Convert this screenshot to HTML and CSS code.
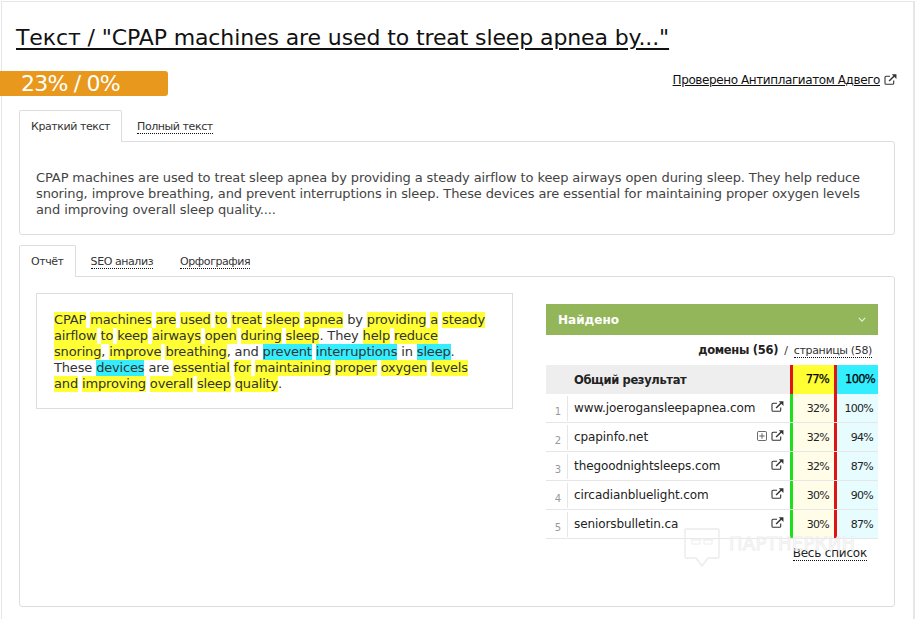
FILE: index.html
```html
<!DOCTYPE html>
<html lang="ru">
<head>
<meta charset="utf-8">
<title>Текст</title>
<link rel="stylesheet" href="styles.css">
</head>
<body>
<svg class="sprite" width="0" height="0" aria-hidden="true"><defs>
<symbol id="ext" viewBox="0 0 14 12"><path d="M10.5 7v3a1.2 1.2 0 0 1-1.2 1.2H2.2A1.2 1.2 0 0 1 1 10V3.6a1.2 1.2 0 0 1 1.2-1.2h4.3" fill="none" stroke="currentColor" stroke-width="1.2"/><path d="M5.5 7.6 11.3 1.8" fill="none" stroke="currentColor" stroke-width="1.6"/><path d="M8.4.4h5.1v5z" fill="currentColor"/></symbol>
</defs></svg>
<main class="frame">
  <h1 class="title">Текст / "CPAP machines are used to treat sleep apnea by..."</h1>
  <div class="score-row">
    <div class="score">23% / 0%</div>
    <div class="checked"><a href="#">Проверено Антиплагиатом Адвего</a><svg class="ext"><use href="#ext"/></svg></div>
  </div>
  <div class="tabs">
    <span class="tab active">Краткий текст</span>
    <span class="tab"><span class="dotted">Полный текст</span></span>
  </div>
  <section class="panel text-panel">
    CPAP machines are used to treat sleep apnea by providing a steady airflow to keep airways open during sleep. They help reduce snoring, improve breathing, and prevent interruptions in sleep. These devices are essential for maintaining proper oxygen levels and improving overall sleep quality....
  </section>
  <div class="tabs second">
    <span class="tab active">Отчёт</span>
    <span class="tab"><span class="dotted">SEO анализ</span></span>
    <span class="tab"><span class="dotted">Орфография</span></span>
  </div>
  <section class="panel report">
    <div class="marked"><span class="y">CPAP</span> <span class="y">machines</span> <span class="y">are</span> <span class="y">used</span> <span class="y">to</span> <span class="y">treat</span> <span class="y">sleep</span> <span class="y">apnea</span> by <span class="y">providing</span> <span class="y">a</span> <span class="y">steady</span> <span class="y">airflow</span> <span class="y">to</span> <span class="y">keep</span> <span class="y">airways</span> <span class="y">open</span> <span class="y">during</span> <span class="y">sleep</span>. They <span class="y">help</span> <span class="y">reduce</span> <span class="nb"><span class="y">snoring</span>,</span> <span class="y">improve</span> <span class="nb"><span class="y">breathing</span>,</span> and <span class="c">prevent</span> <span class="c">interruptions</span> in <span class="nb"><span class="c">sleep</span>.</span> These <span class="c">devices</span> are <span class="y">essential</span> <span class="y">for</span> <span class="y">maintaining</span> <span class="y">proper</span> <span class="y">oxygen</span> <span class="y">levels</span> <span class="y">and</span> <span class="y">improving</span> <span class="y">overall</span> <span class="y">sleep</span> <span class="nb"><span class="y">quality</span>.</span></div>
    <div class="found">
      <div class="found-head"><span>Найдено</span><svg class="chev" viewBox="0 0 10 6"><path d="M1 1l4 4 4-4" fill="none" stroke="currentColor" stroke-width="1.4"/></svg></div>
      <div class="found-sub"><b>домены (56)</b> <i>/</i> <span class="dotted">страницы (58)</span></div>
      <div class="row total">
        <span class="num"></span><span class="name">Общий результат</span>
        <span class="pct a red">77%</span><span class="pct b red">100%</span>
      </div>
      <div class="row"><span class="num">1</span><span class="name">www.joerogansleepapnea.com<svg class="ext"><use href="#ext"/></svg></span><span class="pct a green">32%</span><span class="pct b red">100%</span></div>
      <div class="row"><span class="num">2</span><span class="name">cpapinfo.net<svg class="plus" viewBox="0 0 11 11"><rect x=".5" y=".5" width="10" height="10" rx="1.5" fill="none" stroke="currentColor"/><path d="M5.5 2.5v6M2.5 5.5h6" stroke="currentColor"/></svg><svg class="ext near"><use href="#ext"/></svg></span><span class="pct a green">32%</span><span class="pct b red">94%</span></div>
      <div class="row"><span class="num">3</span><span class="name">thegoodnightsleeps.com<svg class="ext"><use href="#ext"/></svg></span><span class="pct a green">32%</span><span class="pct b red">87%</span></div>
      <div class="row"><span class="num">4</span><span class="name">circadianbluelight.com<svg class="ext"><use href="#ext"/></svg></span><span class="pct a green">30%</span><span class="pct b red">90%</span></div>
      <div class="row"><span class="num">5</span><span class="name">seniorsbulletin.ca<svg class="ext"><use href="#ext"/></svg></span><span class="pct a green">30%</span><span class="pct b red">87%</span></div>
      <div class="all"><span class="dotted">Весь список</span></div>
      <div class="watermark" aria-hidden="true"><svg viewBox="0 0 36 39" width="36" height="39"><path d="M2 1h32a1 1 0 0 1 1 1v27a1 1 0 0 1-1 1H24l-6 8-6-8H2a1 1 0 0 1-1-1V2a1 1 0 0 1 1-1z" fill="none" stroke="#ececec" stroke-width="1.4"/><path d="M6 11h24M8 12h8v4H8zM20 12h8v4h-8z" fill="none" stroke="#ececec"/></svg><span>ПАРТНЕРКИН</span></div>
    </div>
  </section>
</main>
</body>
</html>
```
FILE: styles.css
```css
* { box-sizing: border-box; }
html, body { margin: 0; padding: 0; height: 619px; overflow: hidden; background: #fff; }
body { font-family: "DejaVu Sans", sans-serif; font-size: 12px; color: #333; }
.sprite { position: absolute; }
.frame { height: 640px; width: 914px; margin: 1px 0 0 1px; border: 1px solid #e6e6e6; border-right-width: 2px; border-bottom: 0; padding: 0; }
.title { margin: 0; padding: 22px 0 0 14px; height: 51px; font-size: 22px; line-height: 28px; letter-spacing: -.11px; font-weight: 400; color: #111; text-decoration: underline; text-decoration-thickness: 2px; text-underline-offset: 3px; white-space: nowrap; }
.score-row { display: flex; justify-content: space-between; align-items: center; margin: 18px 0 0 -2px; height: 25px; padding-right: 16px; }
.score { width: 168px; height: 25px; padding-left: 21px; background: #e8981c; border-radius: 0 3px 3px 0; color: #fff; font-size: 22px; line-height: 25px; letter-spacing: -.8px; white-space: nowrap; }
.checked { display: flex; align-items: center; gap: 4px; font-size: 12px; letter-spacing: -.4px; color: #111; margin-top: -8px; }
.checked a { color: #111; }
.ext { width: 13px; height: 11px; color: #333; flex: none; }
.tabs { display: flex; height: 32px; margin: 14px 0 -1px 17px; position: relative; z-index: 1; }
.tabs.second { margin-top: 10px; }
.tab { padding: 9px 11px 0 14px; font-size: 11px; line-height: 14px; letter-spacing: -.43px; color: #333; border: 1px solid transparent; border-bottom: 0; }
.tab.active { background: #fff; border-color: #ddd; border-radius: 2px 2px 0 0; padding: 9px 11px 0; }
.dotted { border-bottom: 1px dotted #111; }
.panel { margin: 0 0 0 17px; width: 876px; border: 1px solid #ddd; border-radius: 0 3px 3px 3px; }
.text-panel { height: 94px; padding: 28px 16px 0; font-size: 13px; line-height: 16px; letter-spacing: -.115px; color: #444; }
.report { height: 331px; padding: 16px 16px; display: flex; align-items: flex-start; }
.marked { width: 477px; height: 116px; padding: 18px 22px 18px 17px; border: 1px solid #ddd; font-size: 13px; line-height: 16px; letter-spacing: -.16px; color: #333; }
.nb { white-space: nowrap; }
.y, .c { display: inline-block; line-height: 16px; }
.y { background: #ffff33; }
.c { background: #33eeff; }
.found { width: 332px; margin: 11px 0 0 33px; position: relative; }
.found-head { height: 31px; padding: 0 12px; display: flex; justify-content: space-between; align-items: center; background: #94b65a; color: #fff; font-weight: 700; font-size: 12px; }
.chev { width: 8px; height: 5px; color: #e7efd8; }
.found-sub { height: 30px; padding: 7px 6px 0 0; text-align: right; font-size: 11px; line-height: 16px; letter-spacing: -.35px; }
.found-sub b { color: #222; font-size: 11.5px; letter-spacing: -.3px; }
.found-sub i { font-style: normal; margin: 0 3px; }
.row { display: grid; grid-template-columns: 22px 1fr 44px 44px; grid-template-rows: 28px; height: 29px; border-bottom: 1px solid #e6e6e6; align-items: stretch; line-height: 28px; font-size: 12px; letter-spacing: -.08px; color: #222; }
.row.total { grid-template-rows: 29px; border-bottom: 0; background: #eee; font-weight: 700; font-size: 11.5px; letter-spacing: -.35px; }
.num { color: #999; font-size: 10px; text-align: center; padding-left: 3px; border-right: 1px solid #e6e6e6; margin: 2px 0 1px; line-height: 32px; }
.total .num { border: 0; }
.name { display: flex; align-items: center; padding: 0 0 0 6px; white-space: nowrap; }
.name .ext { margin: -3px 6px 0 auto; }
.name .ext.near { margin-left: 4px; }
.plus { width: 10px; height: 10px; margin: -3px 0 0 auto; color: #555; }
.pct { text-align: right; padding: 1px 5px 0 0; border-left: 3px solid; font-size: 11px; letter-spacing: -.75px; }
.pct.a { background: #fffde8; }
.pct.b { background: #e6fcff; }
.total .pct { padding-top: 0; font-size: 11.5px; font-weight: 400; color: #000; -webkit-text-stroke: .25px #000; }
.total .pct.a { background: #ffff33; }
.total .pct.b { background: #33eeff; padding-right: 3px; }
.green { border-left-color: #1de01d; }
.red { border-left-color: #e01414; }
.all { text-align: right; padding: 7px 11px 0 0; font-size: 12px; line-height: 15px; letter-spacing: -.2px; color: #222; }
.watermark { position: absolute; left: 138px; top: 224px; display: flex; gap: 9px; pointer-events: none; }
.watermark span { font-size: 18px; line-height: 20px; margin-top: 6px; color: transparent; -webkit-text-stroke: 1px #eeeeee; letter-spacing: .3px; }
```
